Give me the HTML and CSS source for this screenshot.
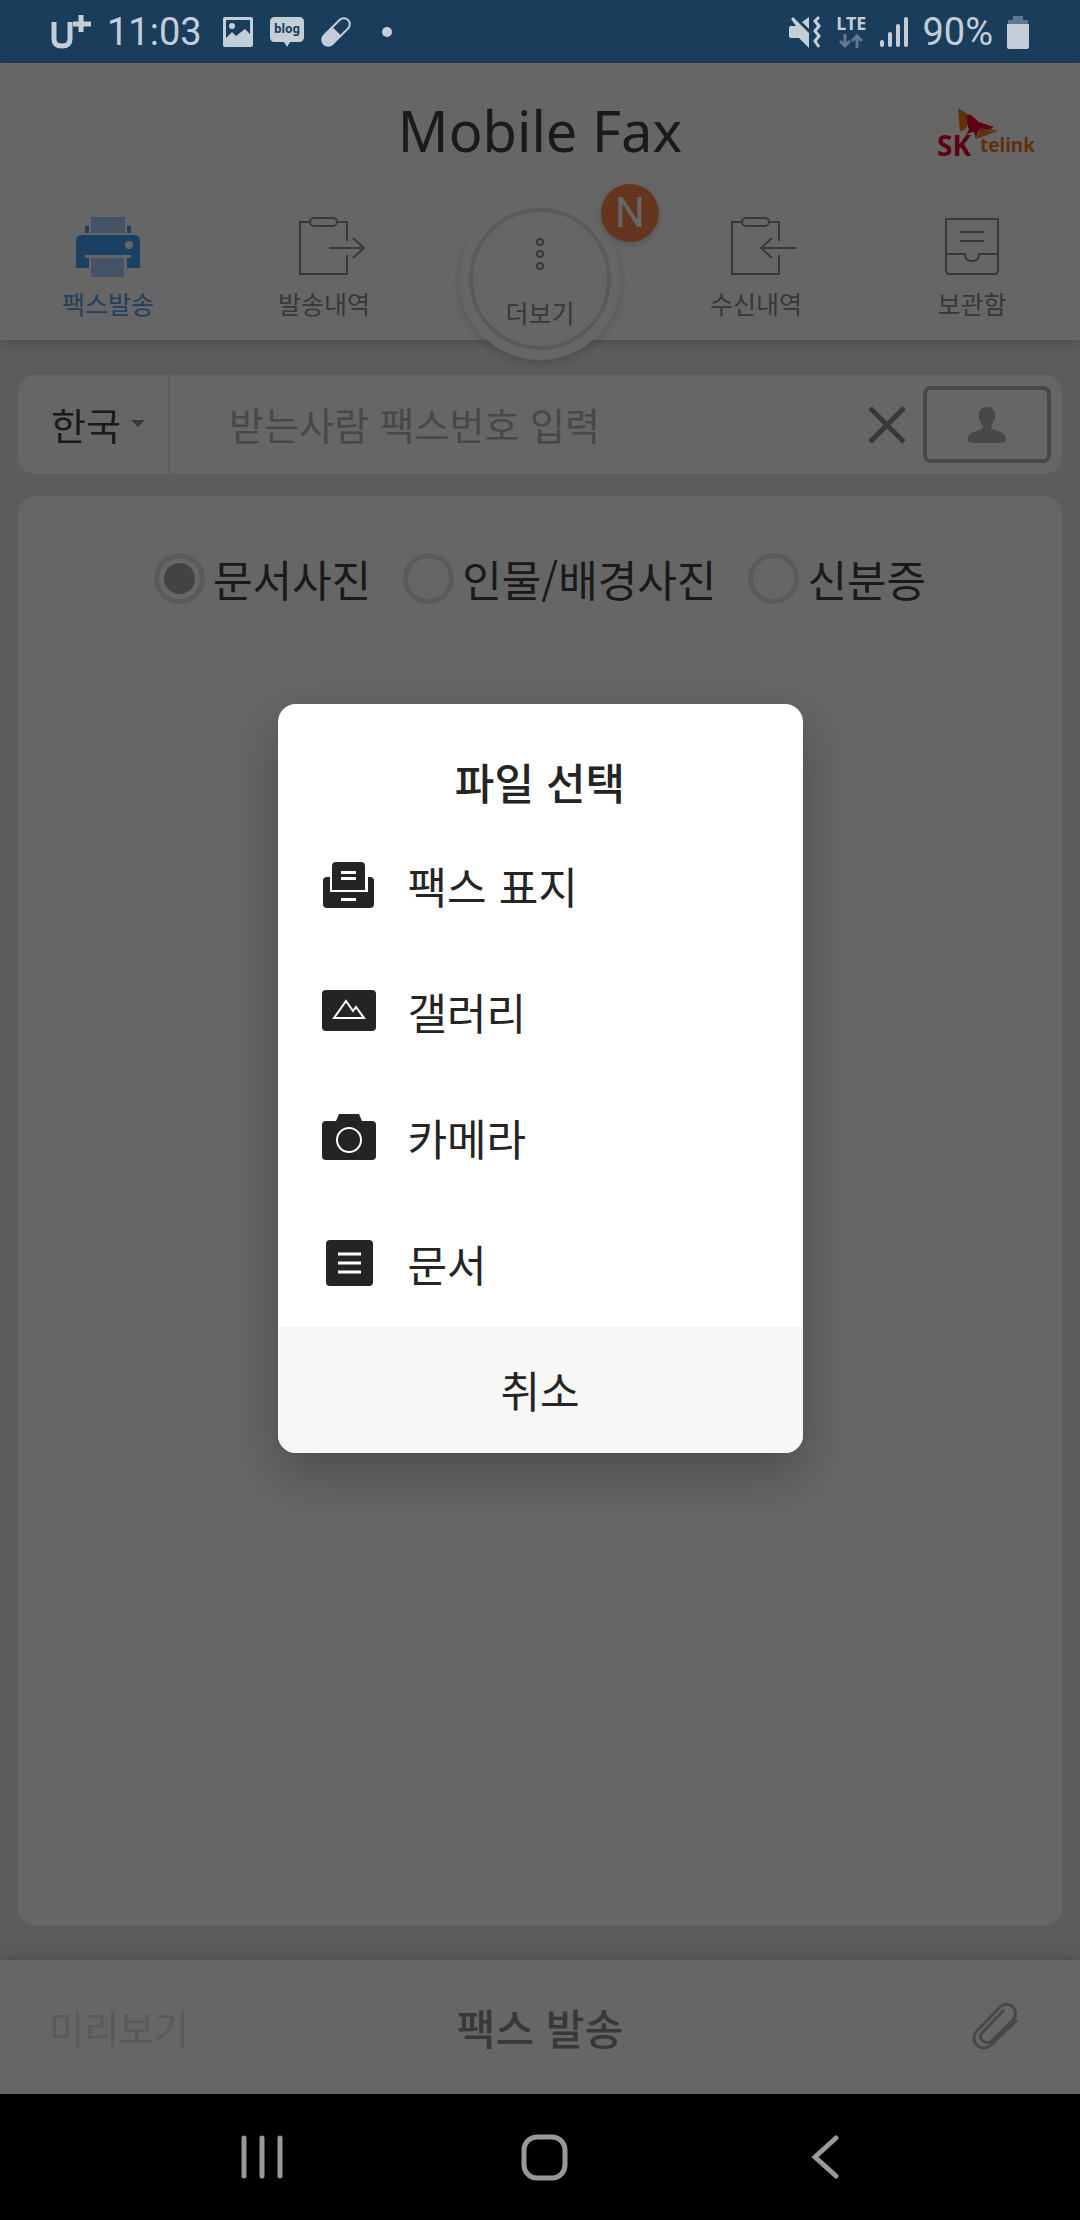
FILE: index.html
```html
<!DOCTYPE html>
<html lang="ko">
<head>
<meta charset="utf-8">
<meta name="viewport" content="width=device-width, initial-scale=1">
<title>Mobile Fax</title>
<link rel="stylesheet" href="styles.css">
</head>
<body>
<div class="status-bar">
  <div class="status-left">
    <svg class="carrier" width="40" height="34" viewBox="0 0 40 34" fill="none" stroke="currentColor" aria-label="U+"><path d="M3 7v17q0 7 8 7t8-7V7" stroke-width="5"/><path d="M22 9h18M30 0v17" stroke-width="5"/></svg>
    <time class="clock">11:03</time>
    <svg width="32" height="32" viewBox="0 0 32 32"><path fill="currentColor" fill-rule="evenodd" d="M3 1h26q2 0 2 2v26q0 2-2 2H3q-2 0-2-2V3q0-2 2-2zM4 4v18l6-6 4 4 9-7 5 5V4z"/><circle cx="10" cy="10" r="3" fill="currentColor"/></svg>
    <svg width="34" height="32" viewBox="0 0 34 32"><path fill="currentColor" d="M5 1h24q5 0 5 5v15q0 5-5 5h-9l-3 5-3-5H5q-5 0-5-5V6q0-5 5-5z"/><text class="blog" x="17" y="17" text-anchor="middle">blog</text></svg>
    <svg width="32" height="32" viewBox="0 0 32 32"><g transform="rotate(45 16 16)"><rect x="10" y="-1" width="12" height="34" rx="6" fill="none" stroke="currentColor" stroke-width="2"/><path fill="currentColor" d="M10 15h12v12a6 6 0 0 1-12 0z"/></g></svg>
    <span class="more-dot"></span>
  </div>
  <div class="status-right">
    <svg width="34" height="34" viewBox="0 0 34 34"><path fill="currentColor" d="M2 11h6L3 4l2-2 16 16v15L11 23H3q-2 0-2-2v-8zM14 7l7-5v12z"/><path d="M31 2l-4 4 4 5-4 5 4 5-4 5 4 6" fill="none" stroke="currentColor" stroke-width="3"/></svg>
    <div class="network"><span>LTE</span><svg width="24" height="14" viewBox="0 0 24 14" fill="none" stroke="#60798f" stroke-width="3"><path d="M6 0v12M1 7l5 5 5-5M18 14V2M13 7l5-5 5 5"/></svg></div>
    <svg width="28" height="30" viewBox="0 0 28 30" stroke="currentColor" stroke-width="4" stroke-linecap="round"><path d="M2 25v3M10 17v11M18 9v19M26 2v26"/></svg>
    <span class="battery-text">90%</span>
    <svg width="22" height="34" viewBox="0 0 22 34"><path fill="#60798f" d="M6 1h10v4h5v4H1V5h5z"/><path fill="currentColor" d="M0 9h22v23q0 2-2 2H2q-2 0-2-2z"/></svg>
  </div>
</div>

<div class="app">
  <header class="header">
    <div class="brand">
      <h1>Mobile Fax</h1>
      <a class="logo" href="#" aria-label="SK telink">
        <svg width="98" height="50" viewBox="0 0 98 50"><path fill="#f07a18" d="M21 1l14 9-7 13-5 1zM39 32l6-13 16 5z"/><path fill="#e6002d" d="M28 12q2-5 6-4l8 7 15 5q-6 4-12 3-4 0-6 9l-2-7q-4 0-8 3l3-6q-2-5-4-10z"/><path d="M23 24q5 0 7-6l-1-8M39 32l2-6q1-6 8-3l11 1" fill="none" stroke="#e9b09a"/></svg>
        <span class="logo-sk">SK</span><span class="logo-telink">telink</span>
      </a>
    </div>
    <nav class="tabs">
      <a class="tab active" href="#">
        <svg width="66" height="62" viewBox="0 0 66 62"><path fill="#abd2ff" d="M16 1h34v16H16zM16 42h33v19H16z"/><path fill="#43a3f5" fill-rule="evenodd" d="M10 10h4v7h-4zM52 10h4v7h-4zM7 19h52q6 0 6 6v27H52V42h4v-3H10v3h4v10H1V25q0-6 6-6z"/><circle cx="54" cy="29" r="4" fill="#fff"/></svg>
        <span>팩스발송</span>
      </a>
      <a class="tab" href="#">
        <svg width="50" height="62" viewBox="0 0 50 62" fill="none" stroke="currentColor" stroke-width="2"><path d="M10 6H1v52h47V39M38 6h10v19"/><rect x="11" y="2" width="27" height="8" rx="4"/><path d="M30 32h35M54 22l11 10-11 10"/></svg>
        <span>발송내역</span>
      </a>
      <div class="tab-more">
        <button class="more" type="button">
          <svg width="12" height="36" viewBox="0 0 12 36" fill="none" stroke="currentColor" stroke-width="2"><circle cx="6" cy="6" r="3"/><circle cx="6" cy="18" r="3"/><circle cx="6" cy="30" r="3"/></svg>
          <span>더보기</span>
        </button>
        <span class="badge">N</span>
      </div>
      <a class="tab" href="#">
        <svg width="50" height="62" viewBox="0 0 50 62" fill="none" stroke="currentColor" stroke-width="2"><path d="M10 6H1v52h47V39M38 6h10v19"/><rect x="11" y="2" width="27" height="8" rx="4"/><path d="M65 32H31M41 22L30 32l11 10"/></svg>
        <span>수신내역</span>
      </a>
      <a class="tab" href="#">
        <svg width="54" height="62" viewBox="0 0 54 62" fill="none" stroke="currentColor" stroke-width="2"><path d="M1 3h52v51q0 4-4 4H5q-4 0-4-4zM1 38h19q0 7 7 7t7-7h19M15 16h24M15 25h24"/></svg>
        <span>보관함</span>
      </a>
    </nav>
  </header>

  <main class="content">
    <form class="recipient">
      <button class="country" type="button">한국<span class="caret"></span></button>
      <input class="number" type="tel" placeholder="받는사람 팩스번호 입력" aria-label="받는사람 팩스번호 입력">
      <button class="clear" type="button" aria-label="지우기"><svg width="38" height="38" viewBox="0 0 38 38" stroke="currentColor" stroke-width="5"><path d="M2 2l34 34M36 2L2 36"/></svg></button>
      <button class="contacts" type="button" aria-label="주소록"><svg width="38" height="38" viewBox="0 0 38 38" fill="currentColor"><path d="M19 1c6 0 9 4 8 11-1 5-4 7-4 9 0 4 15 3 15 12 0 4-1 4-19 4S0 37 0 33c0-9 15-8 15-12 0-2-3-4-4-9-1-7 2-11 8-11z"/></svg></button>
    </form>
    <section class="card">
      <label class="option"><input type="radio" name="kind" checked>문서사진</label>
      <label class="option"><input type="radio" name="kind">인물/배경사진</label>
      <label class="option"><input type="radio" name="kind">신분증</label>
    </section>
  </main>

  <footer class="footer">
    <button class="preview" type="button">미리보기</button>
    <button class="send" type="button">팩스 발송</button>
    <button class="attach" type="button" aria-label="파일 첨부"><svg width="48" height="50" viewBox="0 0 48 50" fill="none" stroke="currentColor" stroke-width="3" stroke-linecap="round"><path d="M45 20L20 44C10 53-3 40 6 30L29 6c9-8 21 3 13 13L20 40c-6 5-14-3-9-8L32 10"/></svg></button>
  </footer>

  <div class="backdrop">
    <div class="dialog" role="dialog" aria-modal="true" aria-labelledby="dialog-title">
      <h2 id="dialog-title">파일 선택</h2>
      <button class="choice" type="button">
        <svg width="54" height="48" viewBox="0 0 54 48"><path fill="currentColor" fill-rule="evenodd" d="M14 1h25q4 0 4 4v24H10V5q0-4 4-4zM19 10v3h15v-3zM19 16v3h15v-3zM1 20q0-4 4-4h3v15h38V16h2q4 0 4 4v23q0 4-4 4H5q-4 0-4-4zM19 37v3h15v-3z"/></svg>
        팩스 표지
      </button>
      <button class="choice" type="button">
        <svg width="54" height="48" viewBox="0 0 54 48"><rect y="3" width="54" height="41" rx="4" fill="currentColor"/><path d="M12 31l12-17 7 10 3-4 8 11z" fill="none" stroke="#fff" stroke-width="2"/></svg>
        갤러리
      </button>
      <button class="choice" type="button">
        <svg width="54" height="48" viewBox="0 0 54 48"><path fill="currentColor" d="M4 8h10l3-7h20l3 7h10q4 0 4 4v31q0 4-4 4H4q-4 0-4-4V12q0-4 4-4z"/><circle cx="27" cy="27" r="12" fill="none" stroke="#fff" stroke-width="2"/></svg>
        카메라
      </button>
      <button class="choice" type="button">
        <svg width="54" height="48" viewBox="0 0 54 48"><rect x="4" y="1" width="47" height="46" rx="4" fill="currentColor"/><path d="M16 15h23M16 24h23M16 33h23" stroke="#fff" stroke-width="3"/></svg>
        문서
      </button>
      <button class="cancel" type="button">취소</button>
    </div>
  </div>
</div>

<nav class="system-nav">
  <button type="button" aria-label="최근 앱"><svg width="48" height="48" viewBox="0 0 48 48" stroke="currentColor" stroke-width="5" stroke-linecap="round"><path d="M5 5v38M23 5v38M41 5v38"/></svg></button>
  <button type="button" aria-label="홈"><svg width="48" height="48" viewBox="0 0 48 48" fill="none" stroke="currentColor" stroke-width="5"><rect x="4" y="4" width="41" height="41" rx="13"/></svg></button>
  <button type="button" aria-label="뒤로"><svg width="48" height="48" viewBox="0 0 48 48" fill="none" stroke="currentColor" stroke-width="5" stroke-linecap="round"><path d="M35 5L14 24l21 19"/></svg></button>
</nav>
</body>
</html>
```
FILE: styles.css
```css
* { box-sizing: border-box; }
body {
  margin: 0;
  min-height: 100vh;
  display: flex;
  flex-direction: column;
  background: #000;
  color: #424242;
  font-family: "Noto Sans CJK KR", "Noto Sans", sans-serif;
}
button, input { font: inherit; color: inherit; margin: 0; }
button { border: 0; padding: 0; background: none; }
a { color: inherit; text-decoration: none; }
svg { display: block; flex: none; overflow: visible; }
h1, h2 { margin: 0; }

.status-bar {
  height: 63px;
  padding: 0 51px;
  display: flex;
  justify-content: space-between;
  align-items: center;
  background: #1a3d5c;
  color: #c4ced8;
  font-family: Roboto, sans-serif;
  font-size: 38px;
  line-height: 48px;
}
.status-left, .status-right { display: flex; align-items: center; }
.status-left { gap: 16px; }
.status-right { gap: 14px; }
.clock { margin-right: 4px; }
.blog { font: 700 12px "Noto Sans", sans-serif; fill: #1a3d5c; }
.more-dot { width: 10px; height: 10px; margin-left: 14px; border-radius: 50%; background: currentColor; }
.network { display: flex; flex-direction: column; align-items: center; gap: 3px; font: 700 18px "Noto Sans", sans-serif; line-height: 16px; }

.app { flex: 1; position: relative; display: flex; flex-direction: column; background: #e6e6e6; }
.header { position: relative; height: 277px; background: #fff; box-shadow: 0 2px 12px rgba(0, 0, 0, .2); }
.brand { height: 142px; display: grid; grid-template-columns: 1fr auto 1fr; align-items: center; padding: 0 45px; }
h1 { grid-column: 2; padding-bottom: 8px; font: 400 56px "Noto Sans", sans-serif; line-height: 64px; }
.logo { position: relative; justify-self: end; width: 98px; height: 50px; margin-bottom: 4px; }
.logo-sk, .logo-telink { position: absolute; bottom: 0; font: 700 28px "Noto Sans", sans-serif; line-height: 24px; }
.logo-sk { left: 0; color: #e6002d; }
.logo-telink { right: 0; font-size: 19px; color: #f07a18; }

.tabs { display: grid; grid-template-columns: repeat(5, 1fr); justify-items: center; color: #8c8c8c; }
.tab { display: flex; flex-direction: column; align-items: center; gap: 9px; padding-top: 11px; font-size: 25px; line-height: 32px; }
.tab.active { color: #599ce6; }
.tab-more { position: relative; width: 162px; height: 162px; margin-top: -7px; padding: 10px; border-radius: 50%; background: #fff; box-shadow: 0 4px 8px rgba(0, 0, 0, .15); }
.more { width: 100%; height: 100%; border: 4px solid #e0e0e0; border-radius: 50%; display: flex; flex-direction: column; align-items: center; gap: 24px; padding-top: 24px; font-size: 25px; line-height: 32px; }
.badge { position: absolute; top: -14px; right: -38px; width: 58px; height: 58px; border-radius: 50%; background: #ff8650; color: #fff; font: 400 42px Roboto, sans-serif; line-height: 58px; text-align: center; box-shadow: 0 2px 6px rgba(0, 0, 0, .2); }

.content { flex: 1; display: flex; flex-direction: column; gap: 22px; padding: 35px 18px; }
.recipient { height: 99px; display: flex; align-items: center; background: #fff; border-radius: 18px; padding-right: 11px; font-size: 38px; }
.country { align-self: stretch; width: 152px; display: flex; align-items: center; gap: 10px; padding: 0 0 2px 33px; border-right: 2px solid #e6e6e6; }
.caret { border: 7px solid transparent; border-top-color: #8c8c8c; border-bottom: 0; }
.number { flex: 1; min-width: 0; height: 64px; border: 0; padding: 0 59px 2px; background: none; outline: 0; }
.number::placeholder { color: #b4b4b4; opacity: 1; }
.clear { color: #8c8c8c; margin-right: 17px; }
.contacts { width: 128px; height: 77px; display: flex; align-items: center; justify-content: center; border: 4px solid #b4b4b4; border-radius: 8px; color: #b4b4b4; }
.card { flex: 1; display: flex; justify-content: center; align-items: flex-start; gap: 32px; padding-top: 56px; background: #fff; border-radius: 18px; }
.option { display: flex; align-items: center; gap: 8px; font-size: 43px; line-height: 52px; }
.option input { appearance: none; width: 51px; height: 51px; border: 5px solid #e0e0e0; border-radius: 50%; }
.option input:checked { background: radial-gradient(circle, #a8a8a8 15px, transparent 16px); }

.footer { height: 134px; display: grid; grid-template-columns: 1fr auto 1fr; align-items: center; padding: 0 49px 2px; background: #fff; box-shadow: 0 -2px 10px rgba(0, 0, 0, .2); }
.preview { justify-self: start; font-size: 38px; color: #e0e0e0; }
.send { font-size: 42px; font-weight: 500; color: #8c8c8c; }
.attach { justify-self: end; padding-right: 12px; color: #b4b4b4; }

.backdrop { position: absolute; inset: 0; display: flex; align-items: center; justify-content: center; background: rgba(0, 0, 0, .6); }
.dialog { width: 525px; border-radius: 18px; overflow: hidden; background: #fff; color: #242424; box-shadow: 0 20px 50px rgba(0, 0, 0, .25); display: flex; flex-direction: column; font-size: 43px; line-height: 60px; }
h2 { padding: 47px 0 12px; font-size: 43px; font-weight: 500; text-align: center; }
.choice { height: 126px; display: flex; align-items: center; gap: 32px; padding: 0 0 2px 44px; }
.cancel { height: 126px; padding-bottom: 2px; background: #f7f7f7; }

.system-nav { height: 126px; display: flex; align-items: center; justify-content: center; gap: 233px; padding-left: 8px; color: #999; }
```
